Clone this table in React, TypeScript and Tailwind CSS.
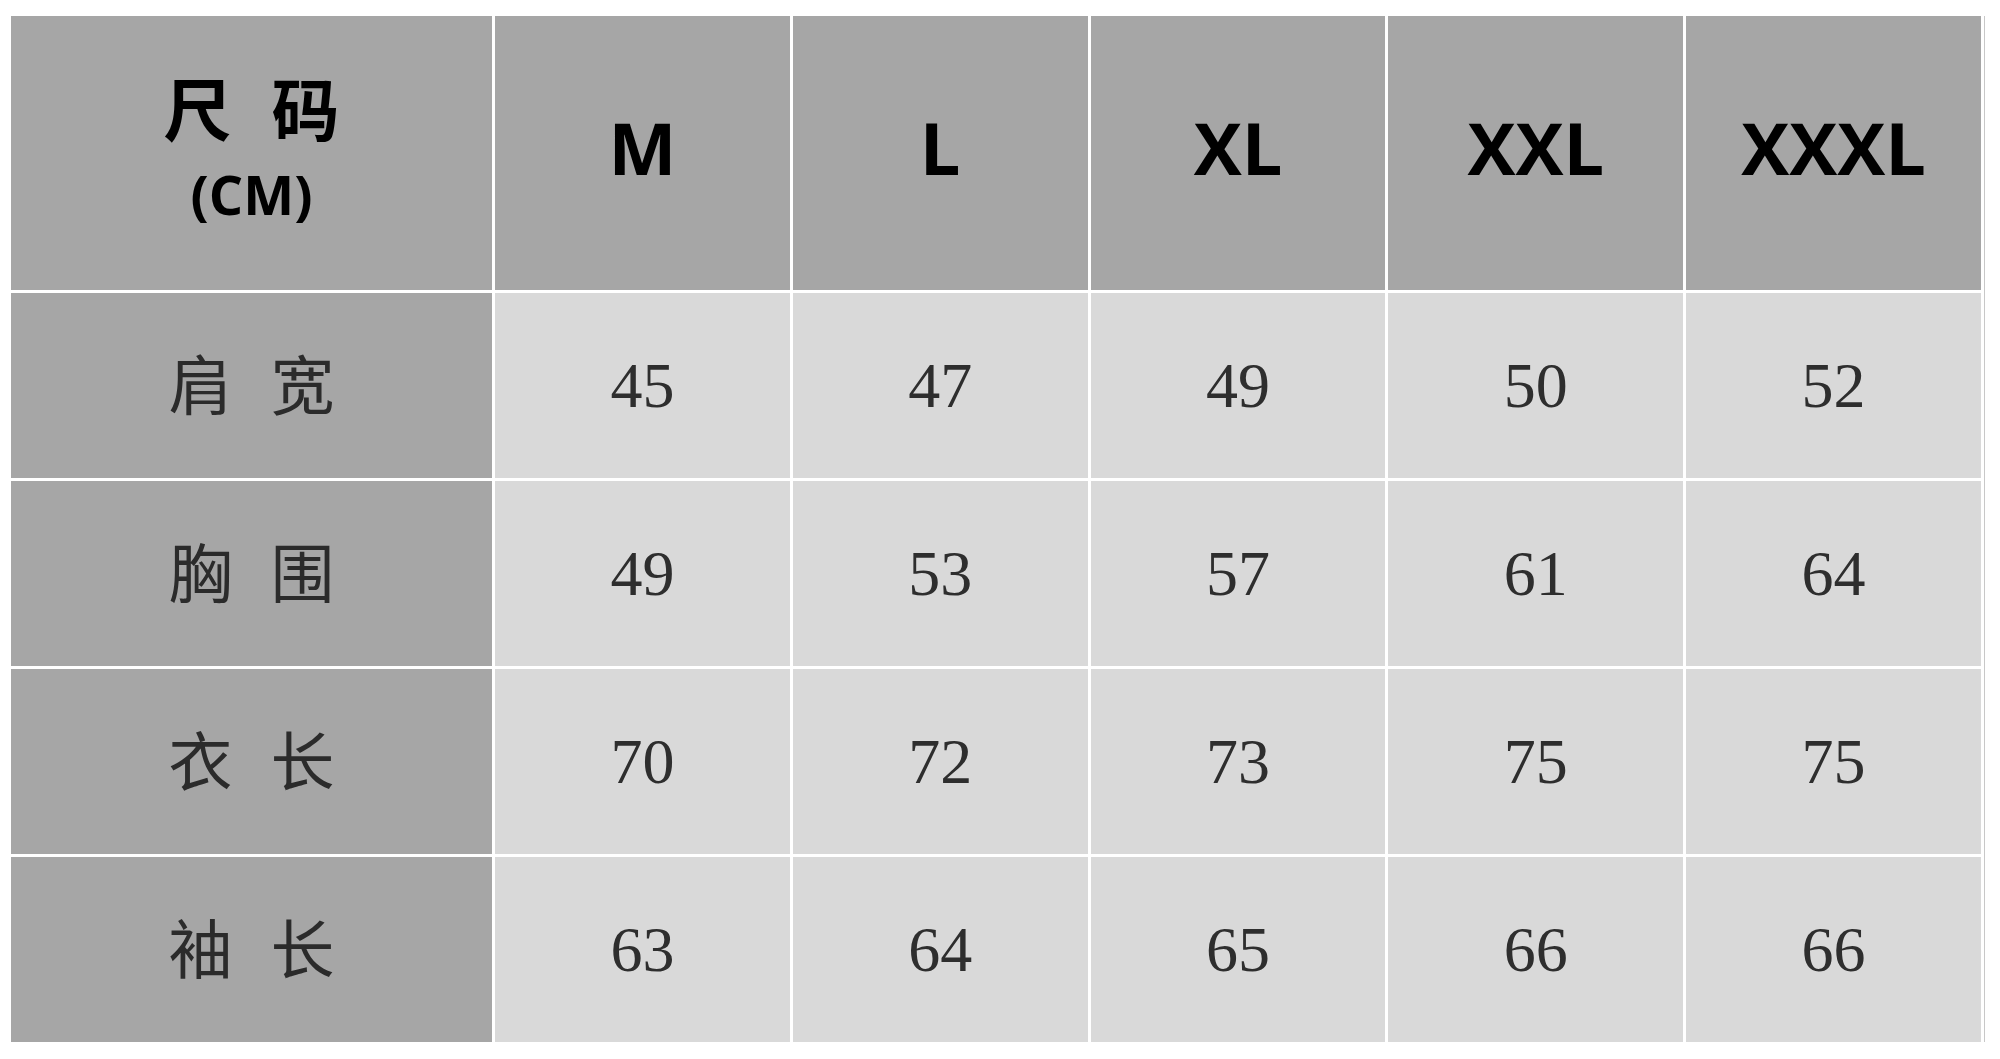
import React from "react";

const sizes = ["M", "L", "XL", "XXL", "XXXL"];
const rows: { label: [string, string]; values: number[] }[] = [
  { label: ["肩", "宽"], values: [45, 47, 49, 50, 52] },
  { label: ["胸", "围"], values: [49, 53, 57, 61, 64] },
  { label: ["衣", "长"], values: [70, 72, 73, 75, 75] },
  { label: ["袖", "长"], values: [63, 64, 65, 66, 66] },
];

export default function App() {
  return (
    <div className="w-[2000px] h-[1059px] bg-white pl-[11px] pt-[16px]">
      <div className="grid w-[1970px] grid-cols-[481px_repeat(5,1fr)] grid-rows-[274px_repeat(4,185px)] gap-[3px] bg-white border-r border-[#c8c8c8] pr-[3px] box-content">
        <div className="bg-[#a6a6a6] flex flex-col items-center justify-center pb-[12px] text-black">
          <div className="flex gap-[40px] font-bold text-[68px] leading-none font-['Noto_Sans_CJK_SC','Noto_Sans',sans-serif]">
            <span>尺</span>
            <span>码</span>
          </div>
          <div className="font-bold text-[54px] leading-none mt-[26px] font-['Open_Sans','Noto_Sans',sans-serif]">
            (CM)
          </div>
        </div>
        {sizes.map((s) => (
          <div
            key={s}
            className="bg-[#a6a6a6] flex items-center justify-center pb-[12px] text-black font-bold text-[72px] leading-none font-['Open_Sans','Noto_Sans',sans-serif]"
          >
            {s}
          </div>
        ))}
        {rows.map((r) => (
          <React.Fragment key={r.label.join("")}>
            <div className="bg-[#a6a6a6] flex items-center justify-center gap-[38px] pb-[10px] text-[#2b2b2b] text-[64px] leading-none font-['Noto_Sans_CJK_SC','Noto_Sans',sans-serif]">
              <span>{r.label[0]}</span>
              <span>{r.label[1]}</span>
            </div>
            {r.values.map((v, i) => (
              <div
                key={i}
                className="bg-[#d9d9d9] flex items-center justify-center text-[#2e2e2e] text-[64px] leading-none font-['Liberation_Serif','Times_New_Roman',serif]"
              >
                {v}
              </div>
            ))}
          </React.Fragment>
        ))}
      </div>
    </div>
  );
}
